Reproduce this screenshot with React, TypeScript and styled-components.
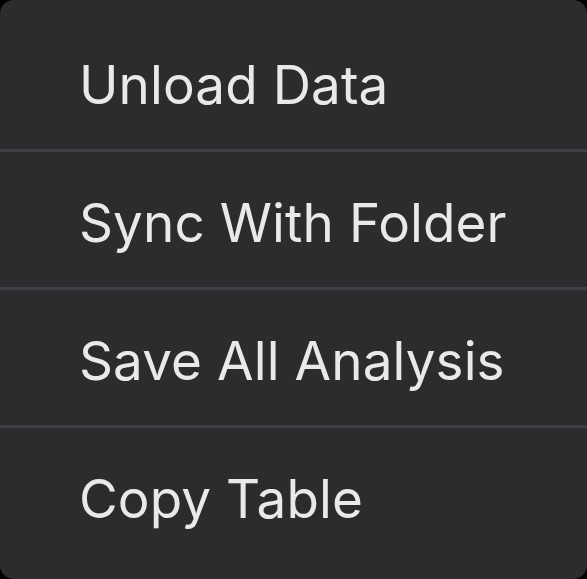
import { Fragment } from "react";
import styled, { createGlobalStyle } from "styled-components";

const GlobalStyle = createGlobalStyle`
  html, body {
    margin: 0;
    padding: 0;
    background: #000;
  }
`;

const Menu = styled.div`
  width: 587px;
  height: 579px;
  box-sizing: border-box;
  background-color: #2c2c2f;
  border-radius: 14px;
  padding: 14px 0 16px;
  display: flex;
  flex-direction: column;
  font-family: Inter, "Noto Sans", sans-serif;
`;

const Item = styled.div`
  flex: 1;
  display: flex;
  align-items: center;
  padding: 6px 0 0 79px;
  font-size: 53px;
  color: #e9e9eb;
  letter-spacing: 0.1px;
  cursor: default;
`;

const Separator = styled.div`
  height: 3px;
  background-color: #3f3f43;
`;

const items = ["Unload Data", "Sync With Folder", "Save All Analysis", "Copy Table"];

export default function App() {
  return (
    <>
      <GlobalStyle />
      <Menu>
        {items.map((label, i) => (
          <Fragment key={label}>
            {i > 0 && <Separator />}
            <Item>{label}</Item>
          </Fragment>
        ))}
      </Menu>
    </>
  );
}
